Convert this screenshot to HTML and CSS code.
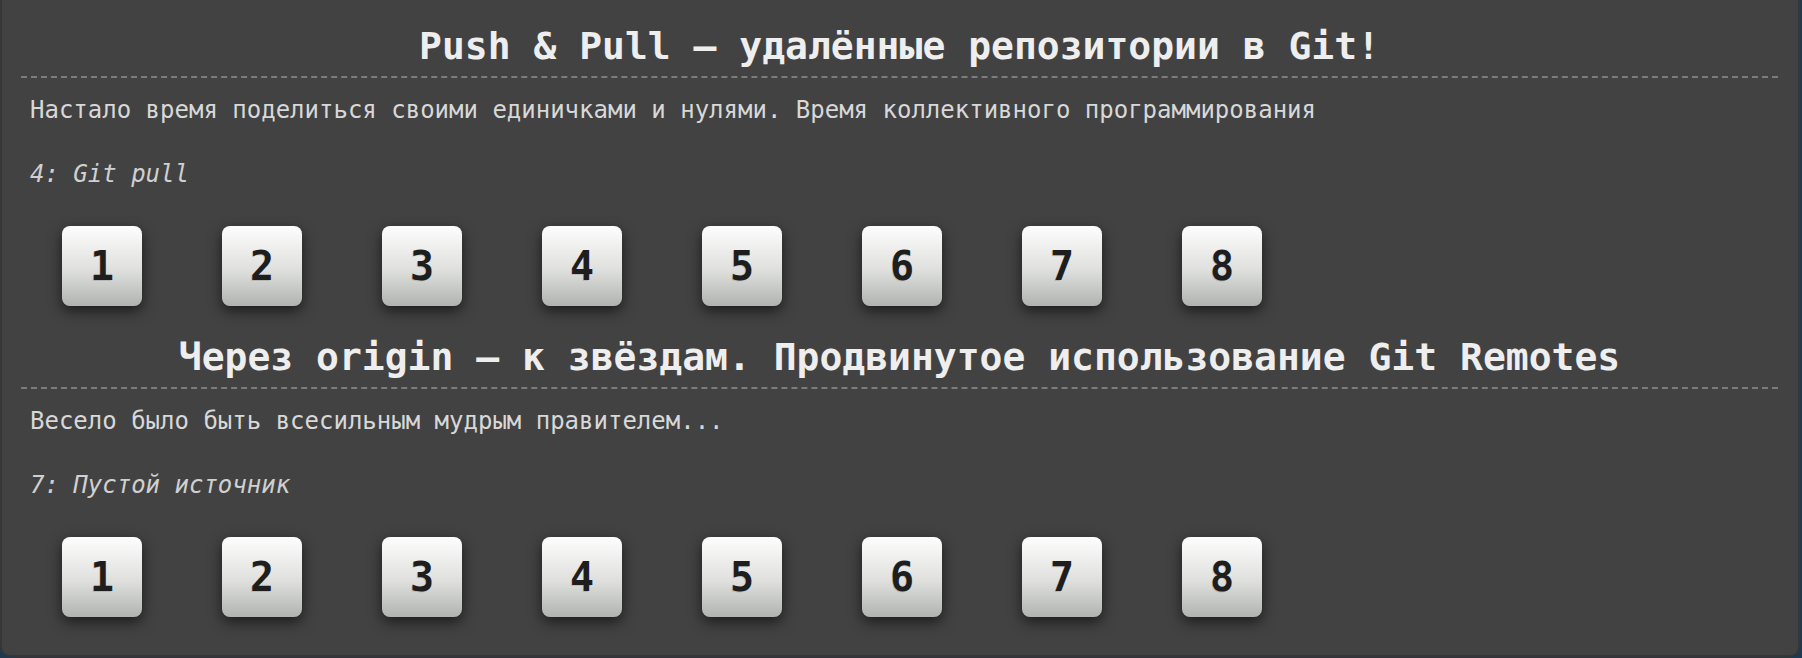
FILE: index.html
```html
<!DOCTYPE html>
<html lang="ru">
<head>
<meta charset="utf-8">
<title>Levels</title>
<link rel="stylesheet" href="styles.css">
</head>
<body>
<div class="panel">
  <section class="sequence">
    <h2 class="seq-title">Push &amp; Pull — удалённые репозитории в Git!</h2>
    <p class="seq-desc">Настало время поделиться своими единичками и нулями. Время коллективного программирования</p>
    <p class="seq-level">4: Git pull</p>
    <div class="levels">
      <div class="level">1</div>
      <div class="level">2</div>
      <div class="level">3</div>
      <div class="level">4</div>
      <div class="level">5</div>
      <div class="level">6</div>
      <div class="level">7</div>
      <div class="level">8</div>
    </div>
  </section>
  <section class="sequence">
    <h2 class="seq-title">Через origin — к звёздам. Продвинутое использование Git Remotes</h2>
    <p class="seq-desc">Весело было быть всесильным мудрым правителем...</p>
    <p class="seq-level">7: Пустой источник</p>
    <div class="levels">
      <div class="level">1</div>
      <div class="level">2</div>
      <div class="level">3</div>
      <div class="level">4</div>
      <div class="level">5</div>
      <div class="level">6</div>
      <div class="level">7</div>
      <div class="level">8</div>
    </div>
  </section>
</div>
</body>
</html>
```
FILE: styles.css
```css
html, body {
  margin: 0;
  padding: 0;
}
body {
  background: #1d3a52;
  font-family: "DejaVu Sans Mono", monospace;
  width: 1802px;
  height: 658px;
  overflow: hidden;
}
.panel {
  width: 1800px;
  height: 657px;
  box-sizing: border-box;
  background: #424242;
  border: 2px solid #373737;
  border-top: none;
  border-radius: 0 0 10px 10px;
  padding: 21px 20px 0 19px;
}
.sequence + .sequence {
  margin-top: 26px;
}
.seq-title {
  margin: 0;
  font-size: 38px;
  font-weight: bold;
  line-height: 50px;
  text-align: center;
  color: #eeeeee;
  padding-bottom: 5px;
  border-bottom: 2px dashed #7c7c7c;
}
.seq-desc {
  margin: 16px 0 0;
  padding-left: 9px;
  font-size: 24px;
  line-height: 32px;
  color: #d8d8d8;
}
.seq-level {
  margin: 32px 0 0;
  padding-left: 9px;
  font-size: 24px;
  line-height: 32px;
  font-style: italic;
  color: #d0d0d0;
}
.levels {
  display: flex;
  gap: 80px;
  padding-left: 41px;
  margin-top: 36px;
}
.level {
  width: 80px;
  height: 80px;
  border-radius: 8px;
  background: linear-gradient(to bottom, #fdfdfd 0%, #dfe0de 55%, #b0b3af 100%);
  box-shadow: 0 5px 14px rgba(0, 0, 0, 0.6);
  display: flex;
  align-items: center;
  justify-content: center;
  font-size: 40px;
  font-weight: bold;
  color: #1e1e1e;
  text-shadow: -1px 1px 0 rgba(0, 0, 0, 0.12);
}
```
